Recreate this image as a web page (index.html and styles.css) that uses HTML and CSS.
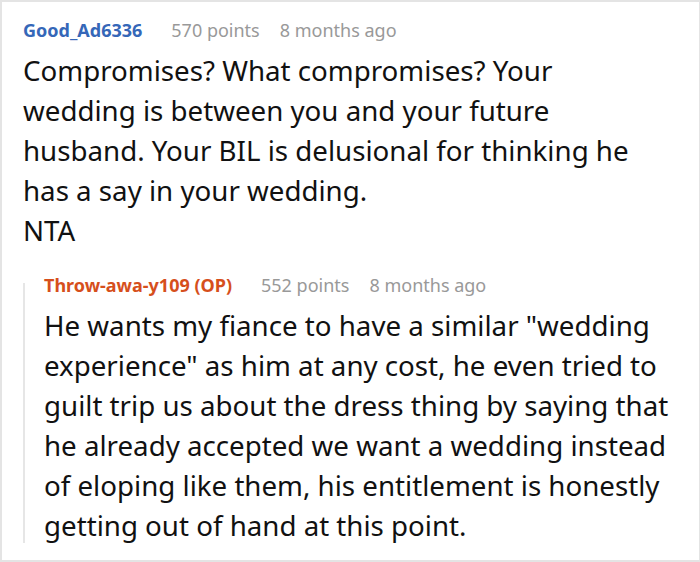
FILE: index.html
```html
<!DOCTYPE html>
<html>
<head>
<meta charset="utf-8">
<link rel="stylesheet" href="styles.css">
</head>
<body>
<div class="frame">
  <div class="comment">
    <div class="meta">
      <span class="author">Good_Ad6336</span>
      <span class="info">570 points</span>
      <span class="info">8 months ago</span>
    </div>
    <div class="body main">Compromises? What compromises? Your wedding is between you and your future husband. Your BIL is delusional for thinking he has a say in your wedding.<br>NTA</div>
    <div class="reply">
      <div class="meta">
        <span class="author op">Throw-awa-y109 (OP)</span>
        <span class="info">552 points</span>
        <span class="info">8 months ago</span>
      </div>
      <div class="body">He wants my fiance to have a similar "wedding experience" as him at any cost, he even tried to guilt trip us about the dress thing by saying that he already accepted we want a wedding instead of eloping like them, his entitlement is honestly getting out of hand at this point.</div>
    </div>
  </div>
</div>
</body>
</html>
```

FILE: styles.css
```css
html, body {
  margin: 0;
  padding: 0;
  background: #ffffff;
}
.frame {
  width: 700px;
  height: 562px;
  box-sizing: border-box;
  border: 2px solid #e4e4e4;
  border-right-width: 1px;
  overflow: hidden;
  font-family: "Noto Sans", "Open Sans", sans-serif;
  color: #111111;
}
.comment {
  padding: 8px 0 0 21px;
}
.meta {
  display: flex;
  gap: 20px;
  font-size: 18px;
  line-height: 40px;
}
.author {
  font-weight: 700;
  color: #3567b8;
  margin-right: 9px;
}
.author.op {
  color: #d64f1c;
}
.info {
  color: #999999;
}
.body {
  font-size: 27.7px;
  line-height: 40px;
  padding-right: 9px;
}
.body.main {
  padding-right: 44px;
}
.reply {
  position: relative;
  margin-top: 15px;
  padding-left: 21px;
}
.reply::before {
  content: "";
  position: absolute;
  left: 0;
  top: 18px;
  bottom: 2px;
  width: 2px;
  background: #e6e6e6;
}
```
